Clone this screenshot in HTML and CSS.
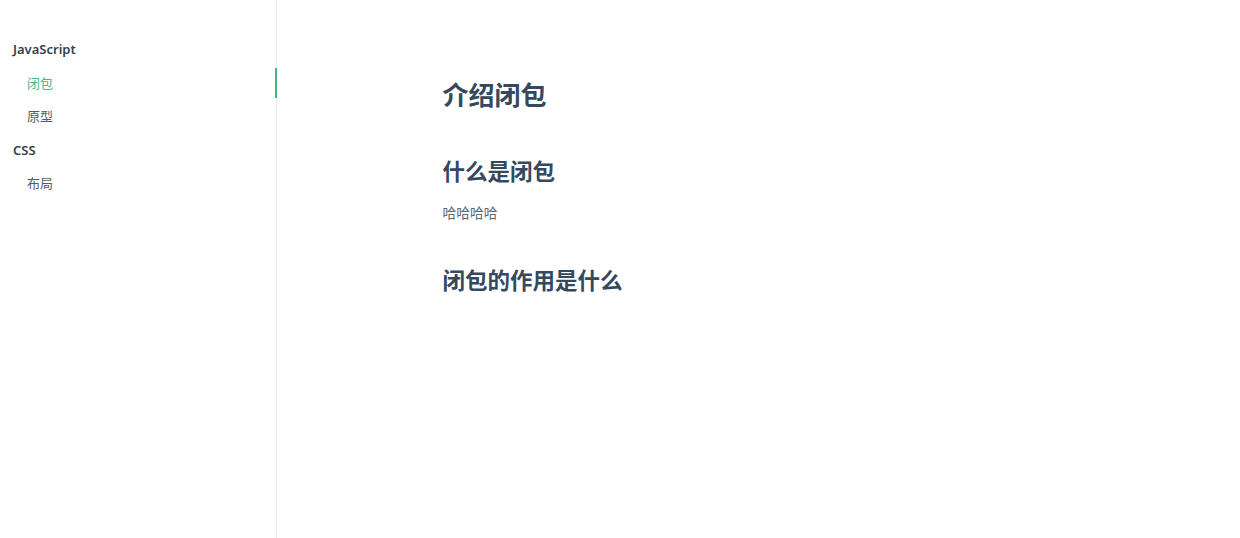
FILE: index.html
```html
<!DOCTYPE html>
<html lang="zh-CN">
<head>
<meta charset="utf-8">
<title>介绍闭包</title>
<link rel="stylesheet" href="styles.css">
</head>
<body>
<aside class="sidebar">
  <ul class="nav">
    <li class="group">JavaScript</li>
    <li class="item active"><a href="#">闭包</a></li>
    <li class="item"><a href="#">原型</a></li>
    <li class="group">CSS</li>
    <li class="item"><a href="#">布局</a></li>
  </ul>
</aside>
<main class="content">
  <article class="markdown">
    <h1>介绍闭包</h1>
    <h2>什么是闭包</h2>
    <p>哈哈哈哈</p>
    <h2>闭包的作用是什么</h2>
  </article>
</main>
</body>
</html>
```
FILE: styles.css
```css
html, body {
  margin: 0;
  padding: 0;
  height: 100%;
}
body {
  display: flex;
  font-family: "Noto Sans", "Noto Sans CJK SC", sans-serif;
  color: #34495e;
  background: #fff;
  -webkit-font-smoothing: antialiased;
}
.sidebar {
  width: 276px;
  flex: 0 0 276px;
  border-right: 1px solid rgba(0, 0, 0, 0.07);
  height: 100%;
  box-sizing: content-box;
}
.nav {
  list-style: none;
  margin: 0;
  padding: 34px 0 0;
  display: flex;
  flex-direction: column;
  gap: 3.5px;
}
.nav li {
  height: 30px;
  line-height: 30px;
  font-size: 13px;
}
.group {
  padding-left: 13px;
  font-weight: 600;
  color: #364149;
}
.item a {
  display: block;
  padding-left: 27px;
  color: #505d6b;
  text-decoration: none;
}
.item.active a {
  color: #42b983;
  margin-right: -1px;
  border-right: 2px solid #42b983;
}
.content {
  flex: 1;
  min-width: 0;
}
.markdown {
  max-width: 632px;
  margin: 0 auto;
  padding: 71px 15px 40px;
}
h1, h2 {
  color: #34495e;
  font-weight: 600;
  margin: 0;
}
h1 {
  font-size: 26px;
  line-height: 48px;
}
h2 {
  font-size: 22.5px;
  line-height: 36px;
  margin-top: 35px;
}
p {
  font-size: 13.75px;
  line-height: 22px;
  margin: 12px 0 0;
  color: #5a6877;
}
p + h2 {
  margin-top: 39px;
}
```
